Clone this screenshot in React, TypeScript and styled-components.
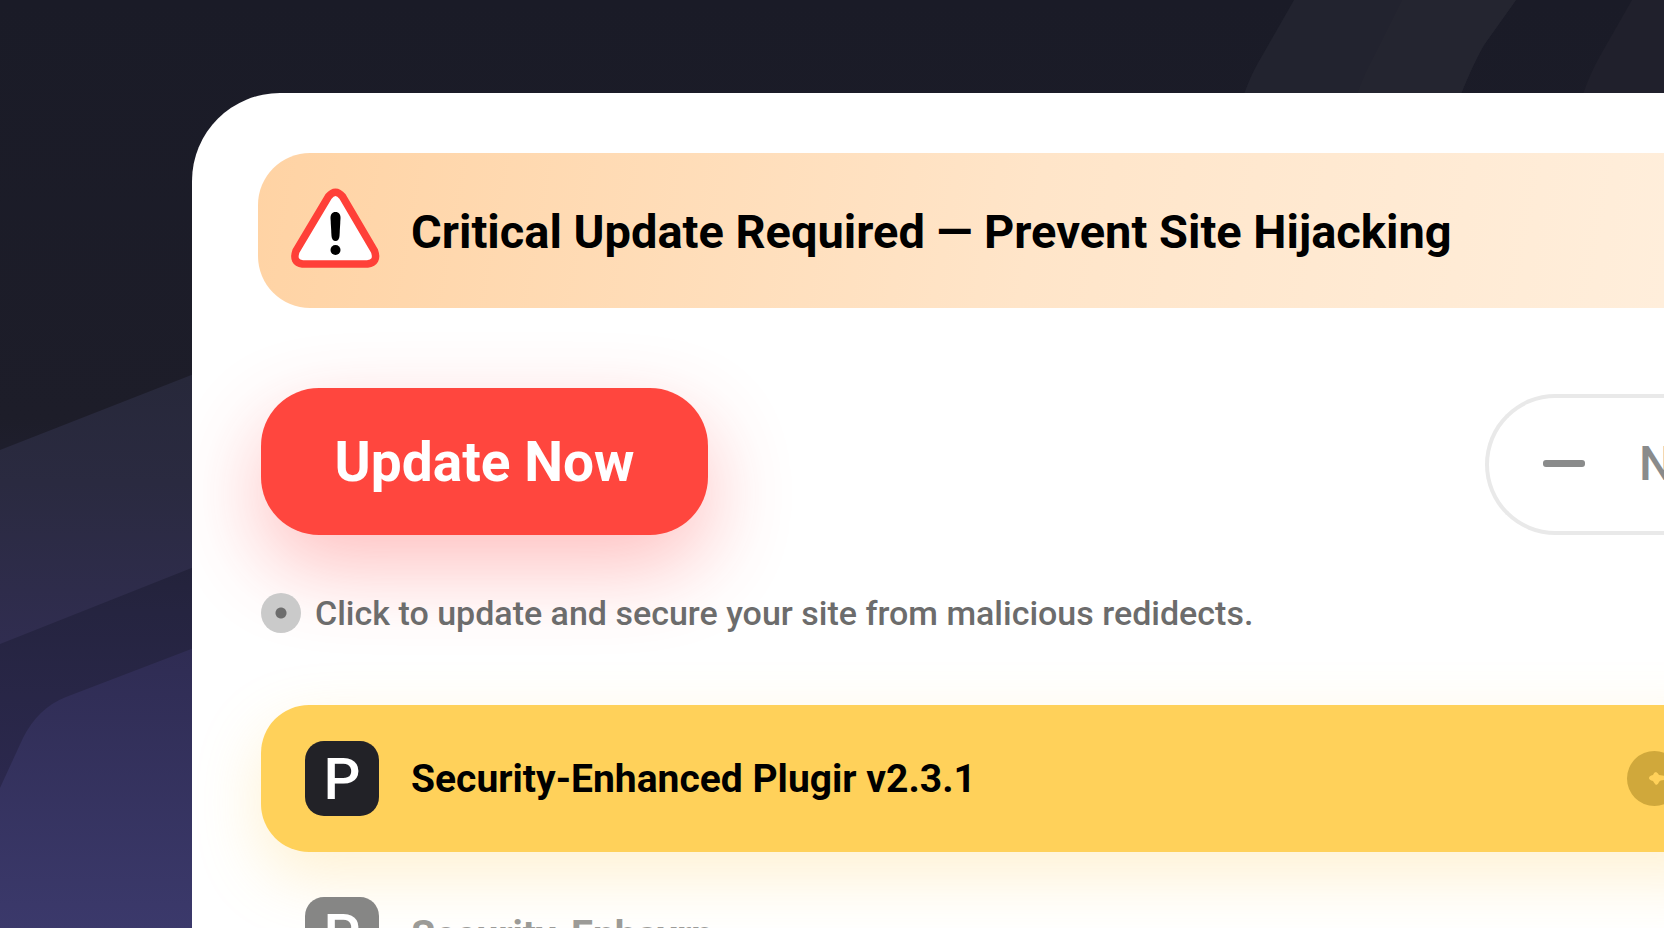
import React from "react";
import styled, { createGlobalStyle } from "styled-components";

const GlobalStyle = createGlobalStyle`
  *, *::before, *::after { box-sizing: border-box; }
  body { margin: 0; background: #1b1c27; }
  button, input { font: inherit; margin: 0; }
`;

const Page = styled.div`
  position: relative;
  display: flex;
  height: 100vh;
  overflow: hidden;
  font-family: Roboto, "Liberation Sans", sans-serif;
  color: #000;
`;

const Backdrop = styled.svg`
  position: absolute;
  inset: 0;
  width: 100%;
  height: 100%;
`;

const Card = styled.main`
  position: relative;
  flex: 1;
  min-width: 0;
  margin: 93px 0 0 192px;
  padding-top: 60px;
  border-radius: 88px 0 0 0;
  background: #fff;
  overflow: hidden;
`;

const Banner = styled.header`
  display: flex;
  align-items: center;
  gap: 31px;
  height: 155px;
  margin-left: 66px;
  padding-left: 32px;
  border-radius: 52px 0 0 52px;
  background: linear-gradient(100deg, #ffd3a4 0%, #ffe5c9 55%, #ffeedb 100%);
`;

const WarningIcon = styled.svg`
  flex: none;
  width: 90px;
  height: 86px;
`;

const Title = styled.h1`
  margin: 0;
  padding-top: 2px;
  font-size: 47px;
  font-weight: 700;
  line-height: 56px;
  white-space: nowrap;
`;

const Body = styled.section`
  padding: 80px 0 0 69px;
`;

const Actions = styled.div`
  display: flex;
  align-items: flex-end;
  justify-content: space-between;
`;

const PrimaryButton = styled.button`
  width: 447px;
  height: 147px;
  padding: 0;
  border: 0;
  border-radius: 58px;
  background: #ff463e;
  box-shadow: 0 32px 84px rgba(255, 62, 62, 0.33);
  color: #fff;
  font-size: 55px;
  font-weight: 700;
  line-height: 64px;
`;

const SecondaryButton = styled.button`
  display: flex;
  align-items: center;
  gap: 54px;
  width: 179px;
  height: 141px;
  padding: 0 0 2px 54px;
  border: 4px solid #e9e9e9;
  border-right: 0;
  border-radius: 71px 0 0 71px;
  background: #fff;
  color: #8a8b8b;
  font-size: 48px;
  font-weight: 500;
  overflow: hidden;
`;

const Dash = styled.span`
  flex: none;
  width: 42px;
  height: 7px;
  border-radius: 3px;
  background: #8a8b8b;
`;

const Hint = styled.label`
  display: flex;
  align-items: center;
  gap: 14px;
  margin-top: 58px;
  color: #6c6c6c;
  font-size: 34px;
  font-weight: 500;
  line-height: 40px;
  white-space: nowrap;
`;

const Radio = styled.input`
  appearance: none;
  flex: none;
  width: 40px;
  height: 40px;
  border-radius: 50%;
  background: radial-gradient(circle, #6d6d6d 5px, #cacaca 6px);
`;

const PluginList = styled.ul`
  display: flex;
  flex-direction: column;
  gap: 9px;
  margin: 72px -64px 0 0;
  padding: 0;
  list-style: none;
`;

const PluginRow = styled.li<{ $active?: boolean }>`
  display: flex;
  align-items: center;
  gap: 32px;
  height: 147px;
  padding: 0 46px 0 44px;
  border-radius: 48px 0 0 48px;
  background: ${(p) => (p.$active ? "#ffd15a" : "transparent")};
  box-shadow: ${(p) => (p.$active ? "0 24px 64px rgba(255, 203, 90, 0.28)" : "none")};
`;

const PluginIcon = styled.span<{ $active?: boolean }>`
  display: grid;
  place-items: center;
  flex: none;
  width: 74px;
  height: 75px;
  border-radius: 19px;
  background: ${(p) => (p.$active ? "#222227" : "#868685")};
  color: #fff;
  font-size: 58px;
  font-weight: 500;
  line-height: 64px;
`;

const PluginName = styled.span<{ $active?: boolean }>`
  flex: 1;
  color: ${(p) => (p.$active ? "#000" : "#9c9b97")};
  font-size: 39px;
  font-weight: 700;
  line-height: 48px;
  white-space: nowrap;
`;

const BadgeButton = styled.button`
  flex: none;
  width: 55px;
  height: 55px;
  padding: 0;
  border: 0;
  border-radius: 50%;
  background: #d0a83b;
`;

const plugins = [
  { name: "Security-Enhanced Plugir v2.3.1", active: true },
  { name: "Security-Enhavrn", active: false },
];

export default function App() {
  return (
    <Page>
      <GlobalStyle />
      <Backdrop viewBox="0 0 1664 928" preserveAspectRatio="xMinYMin slice" aria-hidden="true">
        <defs>
          <linearGradient id="base" x1="0" y1="0" x2="0" y2="928" gradientUnits="userSpaceOnUse">
            <stop offset="0" stopColor="#1a1b27" />
            <stop offset="0.45" stopColor="#1d1d29" />
            <stop offset="0.66" stopColor="#252440" />
            <stop offset="0.84" stopColor="#2b284d" />
          </linearGradient>
          <linearGradient id="upper" x1="0" y1="375" x2="0" y2="643" gradientUnits="userSpaceOnUse">
            <stop offset="0" stopColor="#27283a" />
            <stop offset="0.4" stopColor="#2a2a40" />
            <stop offset="1" stopColor="#302d50" />
          </linearGradient>
          <linearGradient id="lower" x1="0" y1="649" x2="0" y2="928" gradientUnits="userSpaceOnUse">
            <stop offset="0" stopColor="#2f2c53" />
            <stop offset="1" stopColor="#3b396b" />
          </linearGradient>
        </defs>
        <rect width="1664" height="928" fill="url(#base)" />
        <path d="M1294 0H1516L1484 45Q1474 62 1461 94H1244Q1252 72 1262 56Z" fill="#22232f" />
        <path d="M1402 0H1516L1484 45Q1474 62 1461 94H1357Q1364 74 1374 56Z" fill="#242530" />
        <path d="M1632 0H1664V94H1583Q1590 74 1600 56Z" fill="#20202c" />
        <path d="M0 450L194 374V567L0 644Z" fill="url(#upper)" />
        <path d="M0 788L23 738Q38 708 66 697L194 648V928H0Z" fill="url(#lower)" />
      </Backdrop>
      <Card>
        <Banner>
          <WarningIcon viewBox="0 0 90 86" aria-hidden="true">
            <path
              d="M38.500 8.500Q45.500 0 52.500 8.500L84.500 63Q88.500 74.500 77.500 76H12.500Q2 74.500 6 63Z"
              fill="#fff"
              stroke="#ff4038"
              strokeWidth="7.500"
              strokeLinejoin="round"
            />
            <path d="M45.500 24C49 24 50.500 26.500 50.500 30L49.500 48Q49 53 45.500 53T41.500 48L40.500 30C40.500 26.500 42 24 45.500 24Z" />
            <circle cx="45.500" cy="62" r="5" />
          </WarningIcon>
          <Title>Critical Update Required — Prevent Site Hijacking</Title>
        </Banner>
        <Body>
          <Actions>
            <PrimaryButton type="button">Update Now</PrimaryButton>
            <SecondaryButton type="button">
              <Dash />
              No
            </SecondaryButton>
          </Actions>
          <Hint>
            <Radio type="radio" name="update" />
            Click to update and secure your site from malicious redidects.
          </Hint>
          <PluginList>
            {plugins.map((plugin) => (
              <PluginRow key={plugin.name} $active={plugin.active}>
                <PluginIcon $active={plugin.active}>P</PluginIcon>
                <PluginName $active={plugin.active}>{plugin.name}</PluginName>
                {plugin.active && (
                  <BadgeButton type="button" aria-label="Plugin details">
                    <svg width="55" height="55" viewBox="0 0 55 55" aria-hidden="true">
                      <path
                        d="M22 27Q22 25 26 24Q27 21 29 21Q31 22 32 24L40 25Q43 27 38 29Q33 29 32 31Q31 34 29 34Q27 32 26 30Q22 29 22 27Z"
                        fill="#ffd15a"
                      />
                    </svg>
                  </BadgeButton>
                )}
              </PluginRow>
            ))}
          </PluginList>
        </Body>
      </Card>
    </Page>
  );
}
